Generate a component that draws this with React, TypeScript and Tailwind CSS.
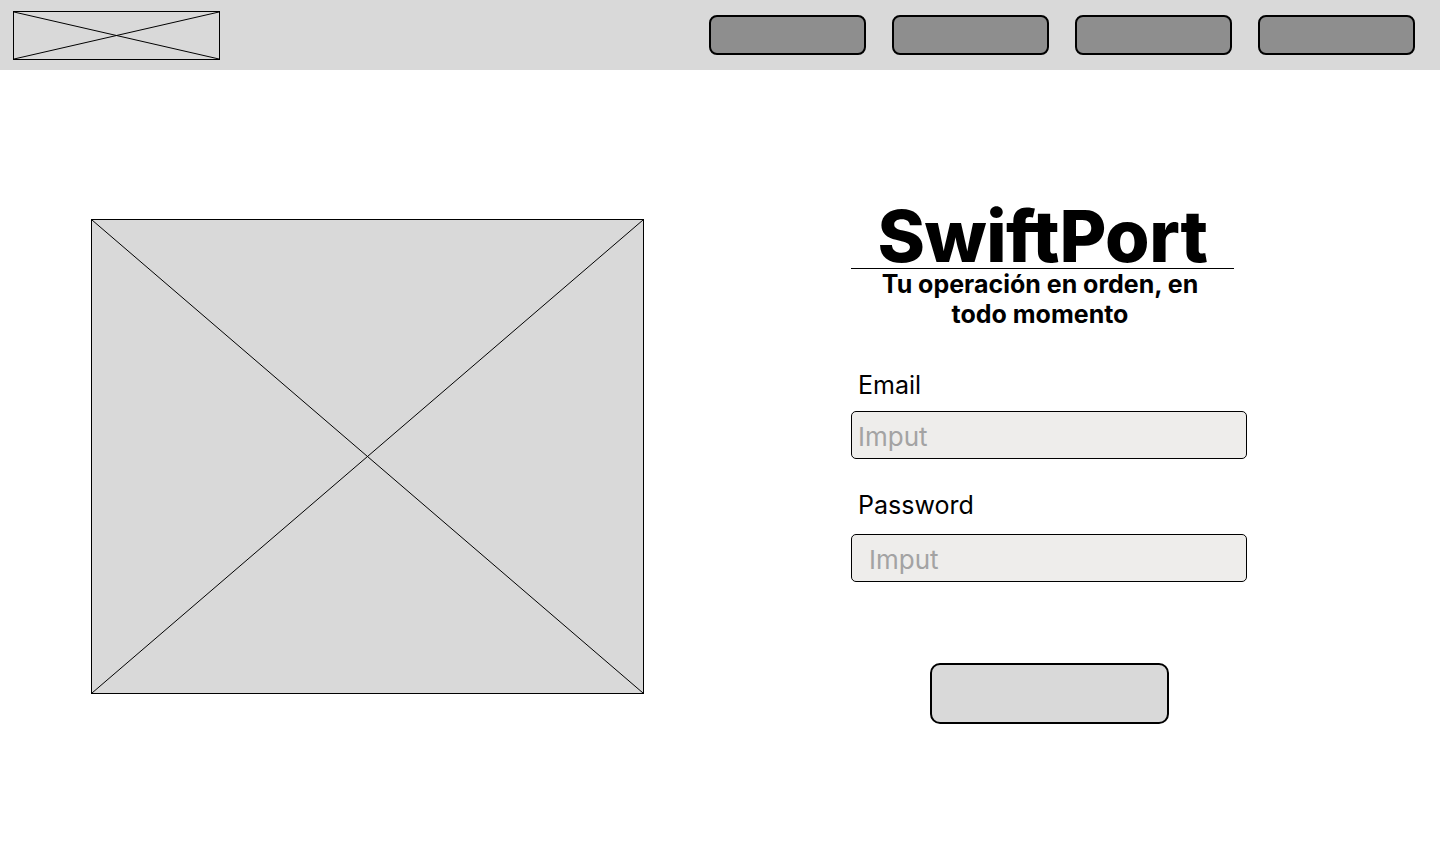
import React from "react";

function XBox({ className }: { className: string }) {
  return (
    <div className={className}>
      <svg className="block h-full w-full" viewBox="0 0 100 100" preserveAspectRatio="none">
        <line x1="0" y1="0" x2="100" y2="100" stroke="#000" strokeWidth="1" vectorEffect="non-scaling-stroke" />
        <line x1="100" y1="0" x2="0" y2="100" stroke="#000" strokeWidth="1" vectorEffect="non-scaling-stroke" />
      </svg>
    </div>
  );
}

export default function App() {
  return (
    <div className="min-h-[859px] bg-white font-['Inter',sans-serif] text-black">
      <header className="flex h-[70px] items-center justify-between bg-[#d9d9d9] pl-[13px] pr-[25px]">
        <XBox className="h-[49px] w-[207px] border border-black" />
        <nav className="flex gap-[26px]">
          <button className="h-[40px] w-[157px] rounded-[8px] border-2 border-black bg-[#8e8e8e]" />
          <button className="h-[40px] w-[157px] rounded-[8px] border-2 border-black bg-[#8e8e8e]" />
          <button className="h-[40px] w-[157px] rounded-[8px] border-2 border-black bg-[#8e8e8e]" />
          <button className="h-[40px] w-[157px] rounded-[8px] border-2 border-black bg-[#8e8e8e]" />
        </nav>
      </header>

      <main className="flex items-start pl-[91px] pt-[130px]">
        <XBox className="mt-[19px] h-[475px] w-[553px] border border-black bg-[#d9d9d9]" />

        <section className="ml-[207px] flex w-[396px] flex-col">
          <div className="h-[69px] w-[383px] border-b border-black pt-[4px]">
            <h1 className="text-center text-[72px] font-extrabold leading-[64px] tracking-[-0.5px]">SwiftPort</h1>
          </div>
          <p className="w-[378px] text-center text-[25px] font-bold leading-[30px]">
            Tu operación en orden, en
            <br />
            todo momento
          </p>

          <label className="mt-[40px] pl-[7px] text-[25px] leading-[32px]">Email</label>
          <div className="mt-[10px] flex h-[48px] items-center rounded-[5px] border border-black bg-[#eeedeb] pl-[6px] pt-[4px]">
            <span className="text-[26px] leading-none text-[#a3a3a3]">Imput</span>
          </div>

          <label className="mt-[30px] pl-[7px] text-[25px] leading-[32px]">Password</label>
          <div className="mt-[13px] flex h-[48px] items-center rounded-[5px] border border-black bg-[#eeedeb] pl-[17px] pt-[4px]">
            <span className="text-[26px] leading-none text-[#a3a3a3]">Imput</span>
          </div>

          <button className="mx-auto mt-[81px] h-[61px] w-[239px] rounded-[10px] border-2 border-black bg-[#d9d9d9]" />
        </section>
      </main>
    </div>
  );
}
